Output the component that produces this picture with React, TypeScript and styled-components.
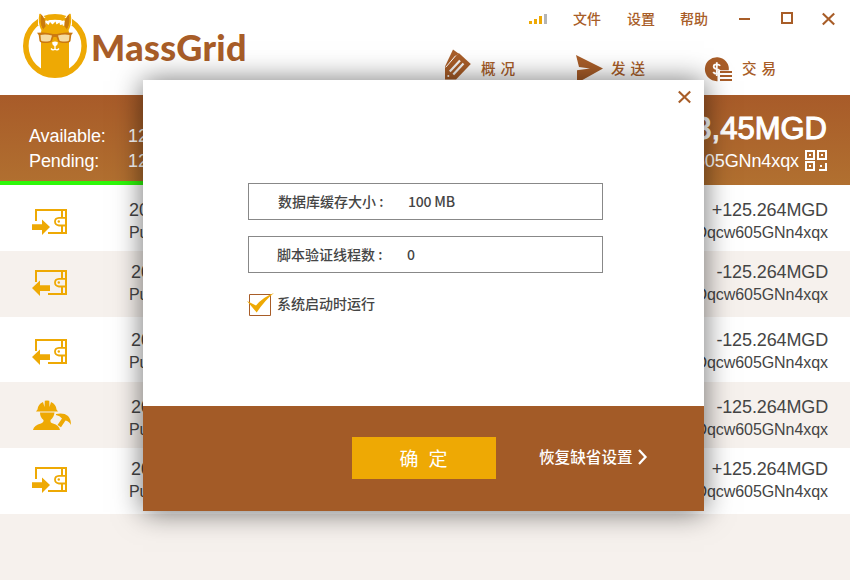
import React from "react";
import styled, { createGlobalStyle } from "styled-components";

const brown = "#a85d28";
const gold = "#eea904";
const cjk = `"Noto Sans CJK SC", sans-serif`;
const arial = `"Liberation Sans", Arial, sans-serif`;

const Global = createGlobalStyle`
  * { box-sizing: border-box; }
  body { margin: 0; background: #f6f1ed; overflow: hidden; }
  svg { display: block; flex: none; overflow: visible; }
  button { border: 0; padding: 0; background: none; }
`;

const Window = styled.main`
  position: relative;
  width: 850px;
  height: 580px;
  overflow: hidden;
  background: #f6f1ed;
  font-family: ${arial};
`;

const Header = styled.header`
  display: flex;
  justify-content: space-between;
  height: 95px;
  background: #fff;
`;

const Brand = styled.div`
  display: flex;
  padding: 10px 0 0 22px;
`;

const BrandName = styled.span`
  margin: 15px 0 0 1px;
  font: 900 36px/44px Lato, sans-serif;
  letter-spacing: 0.35px;
  white-space: nowrap;
  color: ${brown};
`;

const HeaderRight = styled.div`
  width: 407px;
`;

const TitleBar = styled.div`
  display: flex;
  align-items: center;
  height: 37px;
  padding-left: 86px;
`;

const MenuItem = styled.button<{ $gap: number }>`
  width: 28px;
  margin-left: ${(p) => p.$gap}px;
  padding-bottom: 2px;
  font: 500 14px/20px ${cjk};
  white-space: nowrap;
  text-align: left;
  color: ${brown};
`;

const WindowButton = styled.button<{ $gap: number }>`
  margin-left: ${(p) => p.$gap}px;
`;

const Nav = styled.nav`
  display: flex;
  padding-top: 12px;
`;

const NavItem = styled.a<{ $width: number }>`
  display: flex;
  width: ${(p) => p.$width}px;
`;

const PlaneBox = styled.span`
  padding-top: 6px;
`;

const CoinBox = styled.span`
  padding-top: 8px;
`;

const NavLabel = styled.span<{ $gap: number }>`
  margin: 8px 0 0 ${(p) => p.$gap}px;
  font: 500 14.6px/22px ${cjk};
  letter-spacing: 5px;
  white-space: nowrap;
  color: ${brown};
`;

const Balance = styled.section`
  display: flex;
  justify-content: space-between;
  height: 90px;
  background: linear-gradient(#a85b29, #b17030);
  color: #fff;
`;

const BalanceInfo = styled.div`
  width: 420px;
  padding: 29px 0 0 29px;
  border-bottom: 4px solid #2ef70a;
`;

const InfoLine = styled.div`
  display: grid;
  grid-template-columns: 99px 1fr;
  height: 25px;
  font-size: 18px;
  line-height: 25px;
  letter-spacing: -0.1px;
`;

const Wallet = styled.div`
  display: flex;
  flex-direction: column;
  align-items: flex-end;
  padding: 15px 23px 0 0;
`;

const Total = styled.strong`
  font-size: 31px;
  line-height: 37px;
  font-weight: 400;
  -webkit-text-stroke: 1.1px #fff;
`;

const Address = styled.div`
  display: flex;
  gap: 6px;
  margin-top: 3px;
  font-size: 18px;
  line-height: 22px;
  letter-spacing: -0.1px;
`;

const Row = styled.div<{ $height: number; $shade: boolean; $iconTop: number }>`
  display: flex;
  height: ${(p) => p.$height}px;
  padding: 0 22px 0 32px;
  background: ${(p) => (p.$shade ? "#f6f1ed" : "#fff")};
  color: #454545;
  > svg { margin-top: ${(p) => p.$iconTop}px; }
`;

const Lines = styled.div<{ $top: number; $end?: boolean }>`
  display: flex;
  flex-direction: column;
  width: ${(p) => (p.$end ? "auto" : "300px")};
  padding-top: ${(p) => p.$top}px;
  margin-left: ${(p) => (p.$end ? "auto" : "57px")};
  text-align: ${(p) => (p.$end ? "right" : "left")};
`;

const Main = styled.span<{ $indent?: number }>`
  padding-left: ${(p) => p.$indent || 0}px;
  font-size: 18px;
  line-height: 22px;
  letter-spacing: -0.13px;
`;

const Sub = styled.span`
  margin-top: 1px;
  font-size: 16px;
  line-height: 22px;
  letter-spacing: -0.06px;
`;

const Dialog = styled.section`
  position: absolute;
  left: 143px;
  top: 80px;
  width: 561px;
  height: 431px;
  display: flex;
  flex-direction: column;
  background: #fff;
  box-shadow: 0 1px 27px rgba(0, 0, 0, 0.57);
`;

const DialogTop = styled.div`
  display: flex;
  justify-content: flex-end;
  height: 103px;
  padding: 11px 13px 0 0;
`;

const DialogClose = styled.button`
  height: 12px;
`;

const Form = styled.div`
  display: flex;
  flex-direction: column;
  flex: 1;
  padding-left: 105px;
`;

const Field = styled.div<{ $pad: number }>`
  display: flex;
  align-items: center;
  width: 355px;
  height: 37px;
  margin-bottom: 16px;
  padding: 0 0 2px ${(p) => p.$pad}px;
  border: 1px solid #888;
  font: 500 14px/20px ${cjk};
  color: #454545;
`;

const FieldLabel = styled.label<{ $width: number }>`
  width: ${(p) => p.$width}px;
  white-space: pre;
`;

const FieldValue = styled.span`
  letter-spacing: -0.2px;
`;

const CheckRow = styled.label`
  display: flex;
  align-items: flex-start;
  gap: 3px;
  margin-top: 4px;
  font: 500 14px/20px ${cjk};
  color: #454545;
`;

const Footer = styled.footer`
  display: flex;
  height: 105px;
  padding: 31px 0 0 209px;
  background: #a35b27;
`;

const Confirm = styled.button`
  width: 144px;
  height: 42px;
  padding-left: 9px;
  background: ${gold};
  font: 400 19px/42px ${cjk};
  letter-spacing: 10px;
  color: #fff;
`;

const Reset = styled.button`
  display: flex;
  align-items: center;
  gap: 5px;
  height: 40px;
  margin-left: 43px;
  font: 500 15.6px/22px ${cjk};
  white-space: nowrap;
  color: #fff;
`;

const ResetText = styled.span`
  padding-bottom: 2px;
`;

const Llama = () => (
  <svg width="68" height="70" viewBox="0 0 68 70">
    <circle cx="33" cy="36" r="29.2" fill="#fff" stroke={gold} strokeWidth="5.6" />
    <path d="M16 15V9L18 3 25 9V15ZM50 15V9L48 3 41 9V15Z" fill="#fff" />
    <path d="M22 8Q33 4 44 8V11Q33 8 22 11Z" fill={gold} />
    <path d="M19 61V24Q18.6 18 23 16Q33 13 43 16Q47.4 18 47 24V61Q33 71 19 61Z" fill={gold} />
    <path d="m23 17 1-4 2.5 2 1.5-3 2.5 2.5 3-3 1 3 3-2 .5 2.5 3-.5-1 3Z" fill={gold} />
    <path d="M18.3 3.5Q23.8 8 23.8 16L21 19.5Q16 13 18.3 3.5ZM47.7 3.5Q42.2 8 42.2 16L45 19.5Q50 13 47.7 3.5Z" fill="#cb7b0c" />
    <path d="M18.2 4Q16.5 13 20 19.5M47.8 4Q49.5 13 46 19.5" fill="none" stroke={gold} strokeWidth="1.8" />
    <path d="M15 22.8Q24 21.8 31 24H35Q42 21.8 51 22.8L49.3 25 48.5 31Q47.5 33 43 33Q37 33 36 31L34.5 27H31.5L30 31Q29 33 23 33Q18.5 33 17.5 31L16.7 25Z" fill="#cb7910" />
    <path d="M18.5 25Q24 24 30 25.5L28.5 30.5Q28 31.6 23 31.6Q19.5 31.5 19 30.5ZM47.5 25Q42 24 36 25.5L37.5 30.5Q38 31.6 43 31.6Q46.5 31.5 47 30.5Z" fill="#f5dba0" />
    <path d="M30 32.5Q33 30.5 36 32.5Q36 35 33 36.5Q30 35 30 32.5Z" fill="#fff" />
    <path d="M33 35V39M29 38.5Q31 41 33 39Q35 41 37 38.5" fill="none" stroke="#fff" strokeWidth="1.3" />
  </svg>
);

const Signal = () => (
  <svg width="19" height="10" viewBox="0 0 19 10">
    <path d="M0 7H3V10H0ZM5 5H8V10H5ZM10 2H13V10H10Z" fill={gold} />
    <path d="M15 0H18V10H15Z" fill="#b4b4b4" />
  </svg>
);

const Cross = () => (
  <svg width="13" height="12" viewBox="0 0 13 12">
    <path d="m.8.4 11.4 11.2M12.2.4.8 11.6" stroke={brown} strokeWidth="2.1" />
  </svg>
);

const Pencil = () => (
  <svg width="28" height="32" viewBox="0 0 28 32">
    <path d="M2 17.5 10 .5 15.5 4.5 3 18.5Z" fill={brown} />
    <path d="M2 18.7 15.8 4 27.8 15 13 30.5H2Z" fill={brown} />
    <path d="M3 18 12.7 6.6" stroke="#fff" strokeWidth="1" />
    <path d="M6.8 22.5 17 11.5M10.3 25.5 20.5 14.5" stroke="#f5f5f5" strokeWidth="2.2" />
    <circle cx="5.3" cy="27" r="1" fill="#fff" />
  </svg>
);

const Plane = () => (
  <svg width="28" height="30" viewBox="0 0 28 30">
    <path d="M0 0 27 13.5 1 28V15.2L14 13.6 3 12Z" fill={brown} />
  </svg>
);

const Coin = () => (
  <svg width="28" height="26" viewBox="0 0 28 26">
    <path d="M12 24.2A12 12 0 1 1 23.8 13.5H14V24.2Z" fill={brown} />
    <path d="M15.2 8.8Q14 7.3 11.6 7.3 8.7 7.3 8.7 9.4 8.7 11.3 11.6 12 15 12.8 15 14.8 15 16.9 12 16.9 9.2 16.9 8.2 15M11.8 5.3V19" fill="none" stroke="#fff" strokeWidth="1.8" />
    <path d="M12.5 13.5H28V25H12.5Z" fill="#fff" />
    <path d="M15 15H27M15 19H27M15 23H27" stroke={brown} strokeWidth="2" />
  </svg>
);

const QR = () => (
  <svg width="22" height="22" viewBox="0 0 22 22">
    <path d="M1 1H9V9H1ZM13 1H21V9H13ZM1 12H9V20H1Z" fill="none" stroke="#fff" strokeWidth="2" />
    <path d="M4 4H6V6H4ZM16 4H18V6H16ZM4 15H6V17H4ZM15 15H17V17H15ZM20 13H22V21H14V19H20Z" fill="#fff" />
  </svg>
);

const WalletIcon = ({ out = false }: { out?: boolean }) => (
  <svg width="40" height="27" viewBox="0 0 40 27">
    <path d="M4 12V1H34V24H16M30 1V9M30 16.5V24" fill="none" stroke={gold} strokeWidth="2" />
    <path d="M34 8.8H27Q23 9 23 12.5T27 16.5H34" fill="none" stroke={gold} strokeWidth="1.8" />
    <circle cx="26.8" cy="12.5" r="1.2" fill={gold} />
    {out ? <path d="M0 18 8 10.5V15.3H18V21H8V26Z" fill={gold} /> : <path d="M18 18 10 10.5V15.3H0V21H10V26Z" fill={gold} />}
  </svg>
);

const Miner = () => (
  <svg width="40" height="31" viewBox="0 0 40 31">
    <path d="M5.5 9.5Q6 4 11 2L12.5 7 12.8.8Q15 0 17.3.8L17.5 7 19 2Q24 4 24.5 9.5L26 11.5H4Z" fill={gold} />
    <path d="M8 12.5H22.5Q22 17 18.5 20Q18 23 21 23.5Q27 25 28 30H1Q2 25 9 23.5Q12 22 11.5 20Q8 17 8 12.5ZM24 14Q32 12.5 36 16Q39 19 39 25Q37 21 33.5 20.5L29 27.2 25.5 25 30 18.5Q28 15.5 24 15Z" fill={gold} />
  </svg>
);

const rows = [
  { height: 66, icon: 24, top: 14, kind: "in", amount: "+125.264MGD", indent: 0 },
  { height: 66, icon: 19, top: 10, kind: "out", amount: "-125.264MGD", indent: 2 },
  { height: 65, icon: 22, top: 12, kind: "out", amount: "-125.264MGD", indent: 2 },
  { height: 66, icon: 18, top: 14, kind: "mine", amount: "-125.264MGD", indent: 2 },
  { height: 66, icon: 19, top: 10, kind: "in", amount: "+125.264MGD", indent: 2 },
];

export default function App() {
  return (
    <>
      <Global />
      <Window>
        <Header>
          <Brand>
            <Llama />
            <BrandName>MassGrid</BrandName>
          </Brand>
          <HeaderRight>
            <TitleBar>
              <Signal />
              <MenuItem $gap={25}>文件</MenuItem>
              <MenuItem $gap={26}>设置</MenuItem>
              <MenuItem $gap={25}>帮助</MenuItem>
              <WindowButton $gap={31}>
                <svg width="11" height="2" viewBox="0 0 11 2"><path d="M0 1H11" stroke={brown} strokeWidth="2" /></svg>
              </WindowButton>
              <WindowButton $gap={31}>
                <svg width="12" height="14" viewBox="0 0 12 14"><path d="M1 1H11V11H1Z" fill="none" stroke={brown} strokeWidth="2" /></svg>
              </WindowButton>
              <WindowButton $gap={29}><Cross /></WindowButton>
            </TitleBar>
            <Nav>
              <NavItem $width={133}><Pencil /><NavLabel $gap={10}>概况</NavLabel></NavItem>
              <NavItem $width={129}><PlaneBox><Plane /></PlaneBox><NavLabel $gap={7}>发送</NavLabel></NavItem>
              <NavItem $width={140}><CoinBox><Coin /></CoinBox><NavLabel $gap={9}>交易</NavLabel></NavItem>
            </Nav>
          </HeaderRight>
        </Header>
        <Balance>
          <BalanceInfo>
            <InfoLine><span>Available:</span><span>12</span></InfoLine>
            <InfoLine><span>Pending:</span><span>12</span></InfoLine>
          </BalanceInfo>
          <Wallet>
            <Total>3,45MGD</Total>
            <Address>605GNn4xqx<QR /></Address>
          </Wallet>
        </Balance>
        {rows.map((r, i) => (
          <Row key={i} $height={r.height} $shade={i % 2 === 1} $iconTop={r.icon}>
            {r.kind === "mine" ? <Miner /> : <WalletIcon out={r.kind === "out"} />}
            <Lines $top={r.top}>
              <Main $indent={r.indent}>20</Main>
              <Sub>Pu</Sub>
            </Lines>
            <Lines $top={r.top} $end>
              <Main>{r.amount}</Main>
              <Sub>Dqcw605GNn4xqx</Sub>
            </Lines>
          </Row>
        ))}
        <Dialog>
          <DialogTop><DialogClose><Cross /></DialogClose></DialogTop>
          <Form>
            <Field $pad={29}><FieldLabel $width={130}>数据库缓存大小 :</FieldLabel><FieldValue>100 MB</FieldValue></Field>
            <Field $pad={28}><FieldLabel $width={130}>脚本验证线程数 :</FieldLabel><FieldValue>0</FieldValue></Field>
            <CheckRow>
              <svg width="26" height="24" viewBox="0 0 26 24">
                <path d="M1.5 1.5H22.5V22.5H1.5Z" fill="#fff" stroke={brown} />
                <path d="M-1 8 8 12.5Q15 4 26 0 17 7 8.7 19.5Z" fill={gold} />
              </svg>
              系统启动时运行
            </CheckRow>
          </Form>
          <Footer>
            <Confirm>确定</Confirm>
            <Reset>
              <ResetText>恢复缺省设置</ResetText>
              <svg width="9" height="16" viewBox="0 0 9 16"><path d="m1 1 6.5 7L1 15" fill="none" stroke="#fff" strokeWidth="2.3" /></svg>
            </Reset>
          </Footer>
        </Dialog>
      </Window>
    </>
  );
}
